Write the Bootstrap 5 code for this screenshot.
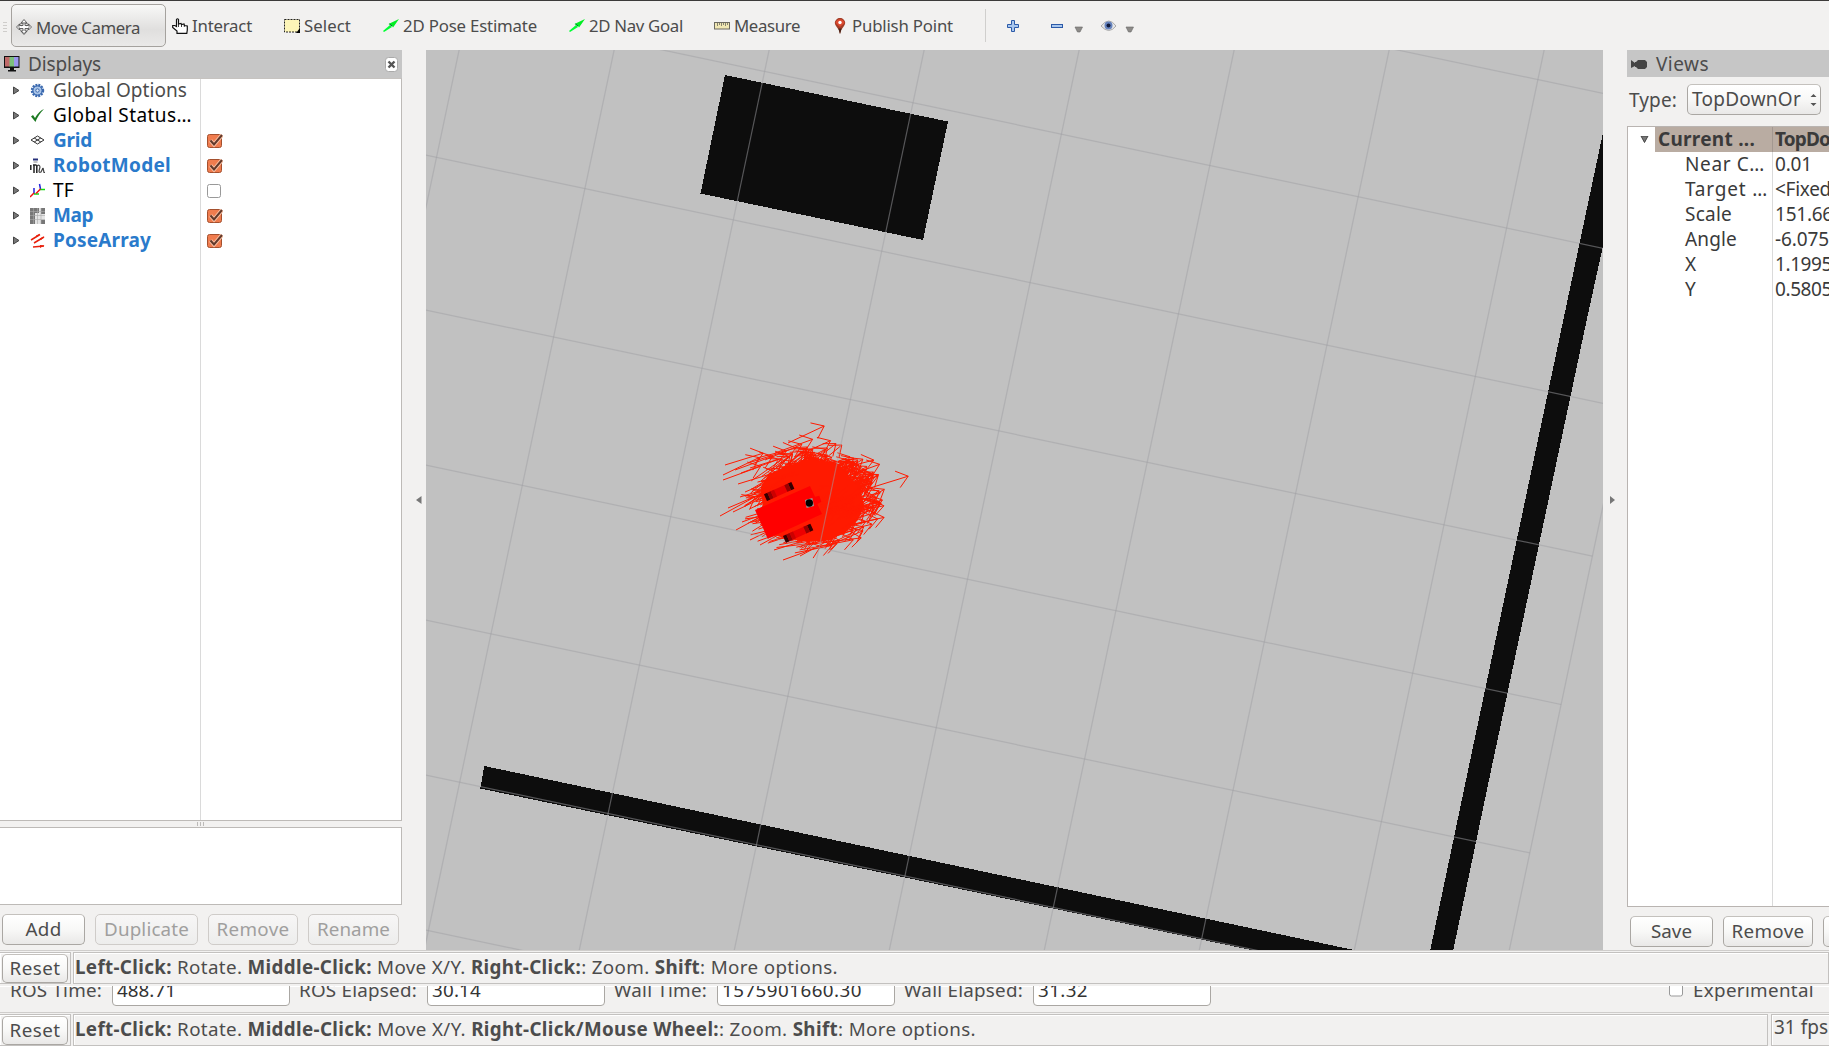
<!DOCTYPE html>
<html lang="en">
<head>
<meta charset="utf-8">
<title>RViz</title>
<link href="https://cdn.jsdelivr.net/npm/bootstrap@5.3.0/dist/css/bootstrap.min.css" rel="stylesheet">
<style>
body{font-family:"Noto Sans","Open Sans",sans-serif;font-size:19px;line-height:25px;color:#4c4c4c;background:#f2f1f0;width:1829px;height:1046px;overflow:hidden}
svg{display:block;flex:none}
[data-w]{white-space:nowrap;display:inline-block;flex:none}
.toolbar{height:50px;border-top:1px solid #3c3b3a;font-size:16.8px;flex:none}
.grip{width:11px;padding:21px 0 0 3px;flex:none}
.grip i{display:block;width:4px;height:1px;background:#cfcdcb;margin-bottom:2px}
.tool{height:43px;margin-top:3px;gap:4px;flex:none}
.tool.on{width:155px;border:1px solid #a5a29e;border-radius:5px;background:linear-gradient(#f8f8f7,#e0dfde 60%,#eae9e8);padding:3px 0 0 4px;margin-right:6px;gap:4px}
.t-int{width:112px}.t-sel{width:99px}.t-pose{width:186px}.t-nav{width:145px}.t-mea{width:119px}.t-pub{width:152px}
.vsep{width:1px;height:33px;background:#d0cfcd;margin-top:8px;margin-right:21px}
.main{height:900px;flex:none}
.leftcol{width:402px;flex:none}
.gut{width:24px;flex:none}
.dockhead{height:28px;background:#c6c6c6;flex:none;line-height:27px}
.tree{background:#fff;border:1px solid #bdbab7;border-left:0;height:743px;flex:none;border-top-color:#c6c3c0;background-image:linear-gradient(#dadada,#dadada);background-size:1px 100%;background-position:200px 0;background-repeat:no-repeat}
.trow{height:25px;flex:none}
.tree .trow:first-child{margin-top:-1px}
.trow .nm{width:154px;flex:none}
.blue{color:#2a7acb;font-weight:700}
.ink{color:#000}
.split{height:6px;gap:2px;flex:none;padding-right:64px}
.split{padding-right:2px}
.split i{width:1px;height:4px;background:#bcbab8}
.desc{height:78px;border:1px solid #bdbab7;border-left:0;background:#fff;flex:none}
.qbtn{height:31px;border:1px solid #aaa7a3;border-top-color:#c4c1bd;border-radius:5px;background:linear-gradient(#fff,#f8f8f7 50%,#e9e8e7);flex:none;color:#4c4c4c;padding:0;line-height:29px;font-size:18.8px;text-align:center;overflow:hidden}
.qbtn.off{color:#a09f9e;border-color:#cfccc9;background:linear-gradient(#f7f6f6,#ededec)}
.status{height:34px;flex:none;border-top:1px solid #cfcdcb;padding-top:1px;font-size:18.8px}
.fld{height:32px;border:1px solid #c3c1bf;background:#f2f1f0;box-shadow:inset 0 1px #fff,inset 1px 0 #fff;flex:none}
.status .qbtn{height:29px;width:66px;margin:1px 0 0 2px;line-height:26px}
.timebar{height:26px;flex:none;overflow:hidden;font-size:18.8px;box-shadow:inset 0 1px #fff;padding-left:10px}
.timebar>*{margin-top:-8px}
.timebar .lb{margin-right:10px}
.timebar .inp{height:31px;width:178px;margin:-11px 9px 0 0;border:1px solid #aaa7a3;border-radius:4px;background:#fff;color:#333;padding:2px 0 0 4px;flex:none}
.timebar .ecb{margin:-5px 10px 0 449px}
.rightcol{width:202px;flex:none;overflow:hidden}
.vtree{height:781px;background:#fff;border:1px solid #b9b4b1;border-right:0;flex:none;color:#3a3a3a;background-image:linear-gradient(#dadada,#dadada);background-size:1px 100%;background-position:144px 0;background-repeat:no-repeat}
.cur{background:linear-gradient(#a39890,#a39890) 117px 0/1px 100% no-repeat #b9aca2;font-weight:700;width:180px}
.leftbtns{padding:9px 0 0 2px;gap:10px}
.vhead{height:27px;padding-top:1px}
.vtype{height:49px;padding:7px 0 0 2px;gap:10px;line-height:33px;flex:none}
.combo{width:134px;padding-left:4px;gap:9px;font-size:19px}
.k1{width:120px;padding-left:3px;flex:none}
.vtree .kk{width:147px;padding-left:57px;flex:none}
.rbtns{padding:9px 0 0 3px;gap:10px}
.rbtns .qbtn:nth-child(1){width:83px}.rbtns .qbtn:nth-child(2){width:90px}.rbtns .qbtn:nth-child(3){width:80px}
.rs{width:71px;border-left:0;margin-right:2px}
.msg{padding:2px 0 0 1px}
.m2{width:1695px;margin-right:3px}
.fps{width:70px;padding:0 0 0 2px;font-size:19px}
.spacer{height:2px;flex:none}
</style>
<script src="https://cdn.jsdelivr.net/npm/bootstrap@5.3.0/dist/js/bootstrap.bundle.min.js"></script>
</head>
<body class="d-flex flex-column">
<svg width="0" height="0" class="position-absolute"><defs>
<g id="tri"><path d="M.5.5v7L6 4z" fill="#777" stroke="#444"/></g>
<g id="chk"><rect x=".5" y="1.500" width="14" height="13" rx="2" fill="#f07c4e" stroke="#a4502e"/><path d="M3.500 7.500 7 11.500 15 2" fill="none" stroke="#f9c2a6" stroke-width="4"/><path d="M3.500 7.500 7 11.500 15 2" fill="none" stroke="#63392a" stroke-width="2"/></g>
<g id="pose"><path d="M0 12 7 6l2 2L1 13z" fill="#0f3"/><path d="M5.500 5 16 0 10 8.500 9 7z" fill="#0e2"/><path d="m6.500 5 2.500 2" stroke="#063" stroke-width="1"/></g>
</defs></svg>

<div class="toolbar d-flex align-items-start">
 <div class="grip"><i></i><i></i><i></i><i></i></div>
 <div class="tool on d-flex align-items-center">
  <svg width="16" height="16" viewBox="0 0 16 16" fill="#fff" stroke="#555" stroke-width=".9"><path d="M8 .5 11 4H9v2.500h3.500V5L15.500 8l-3 3V9.500H9V12h2L8 15.500 5 12h2V9.500H3.500V11L.5 8l3-3v1.500H7V4H5z"/><path d="M4.500 4.500Q8 3 11.500 4.500T11.500 11.500 4.500 11.500 4.500 4.500M3 5l3 2M13 5l-3 2" stroke-width=".7" fill="none"/></svg>
  <span data-w="104">Move Camera</span></div>
 <div class="tool t-int d-flex align-items-center">
  <svg width="16" height="16" viewBox="0 0 16 16" fill="#fff" stroke="#111" stroke-width="1.200"><path d="M5 15.300V13L.7 9.500V7.500h2L4.500 8.500V1.500Q5.500 0 6.500 1.500V6L9 5.500l.5 1L12 6l.5 1.500 2.800.5v4l-.5 3.300z"/><path d="M6.500 6v3M9.500 6.500V9M12.300 7v2" stroke-width=".8"/></svg>
  <span data-w="60">Interact</span></div>
 <div class="tool t-sel d-flex align-items-center">
  <svg width="16" height="14" viewBox="0 0 16 14"><rect x=".5" y=".5" width="15" height="12.500" fill="#fdf5b8" stroke="#222" stroke-dasharray="2 1"/><path d="M16 9v5h-4z" fill="#000"/></svg>
  <span data-w="47">Select</span></div>
 <div class="tool t-pose d-flex align-items-center">
  <svg width="16" height="14"><use href="#pose"/></svg><span data-w="134">2D Pose Estimate</span></div>
 <div class="tool t-nav d-flex align-items-center">
  <svg width="16" height="14"><use href="#pose"/></svg><span data-w="94">2D Nav Goal</span></div>
 <div class="tool t-mea d-flex align-items-center">
  <svg width="16" height="8" viewBox="0 0 16 8"><rect x=".5" y=".5" width="15" height="6.500" fill="#f1e8b4" stroke="#6c6a60"/><path d="M3.500 1v3M5.500 1v2M7.500 1v3M9.500 1v2M11.500 1v3M13.500 1v2" stroke="#6c6a60" stroke-width=".8"/></svg>
  <span data-w="66">Measure</span></div>
 <div class="tool t-pub d-flex align-items-center">
  <svg width="15" height="16" viewBox="-2 0 15 16"><path d="M5 16Q4 11 1 8A5 5 0 1 1 9 8Q6 11 5 16" fill="#a33c26"/><path d="M.5 5A4.600 4.600 0 0 1 9.500 5L5 9z" fill="#dc4a30"/><circle cx="5" cy="4.500" r="1.700" fill="#fff"/><path d="M3.300 10.500h3.400L5 16z" fill="#4a2418"/></svg>
  <span data-w="101">Publish Point</span></div>
 <div class="vsep"></div>
 <div class="tool d-flex align-items-center">
  <svg width="130" height="16" viewBox="0 0 130 16"><path d="M4.500 2.500h3v4h4v3h-4v4h-3v-4h-4v-3h4z" fill="#a9c7ee" stroke="#2c5aa8"/><rect x="44.500" y="6.500" width="11" height="3" fill="#a9c7ee" stroke="#2c5aa8"/><path d="M68 9h7.500l-2.500 5h-2.500zM119 9h7.500L124 14h-2.500z" fill="#8d8b88" stroke="#666" stroke-width=".6"/><path d="M94 8q8-10 15 0-7 9-15 0" fill="#e8e8e8" stroke="#aaa"/><circle cx="101.500" cy="7.500" r="4" fill="#6683bd"/><circle cx="101.500" cy="7.500" r="2" fill="#111a3a"/></svg></div>
</div>

<div class="main d-flex">
 <div class="leftcol d-flex flex-column">
  <div class="dockhead d-flex align-items-center" >
   <svg width="16" height="16" viewBox="0 0 16 16" class="ms-1 me-2"><rect x="0" y="0" width="15.500" height="12" fill="#111"/><path d="M1 1h5v9.500H1z" fill="#c06a6a"/><path d="M5.500 1h5v9.500h-5z" fill="#7cc07c"/><path d="M10 1h4.500v9.500H10z" fill="#9a96ee"/><path d="M6 12h4v2h2v1.500H4V14h2z" fill="#111"/></svg>
   <span data-w="73">Displays</span>
   <svg class="ms-auto me-1" width="13" height="15" viewBox="0 0 13 15"><rect x=".5" y=".5" width="12" height="14" rx="3" fill="#fff" stroke="#aaa"/><path d="m3.500 4.500 6 6m0-6-6 6" stroke="#555" stroke-width="2.400"/></svg>
  </div>
  <div class="tree">
   <div class="trow d-flex align-items-center"><svg width="30" height="9" viewBox="-13 -.5 30 9"><use href="#tri"/></svg><svg class="me-2" width="15" height="15" viewBox="-7.500 -7.500 15 15"><circle r="5.500" fill="#8fb2e0" stroke="#3a68ae" stroke-width="2.400" stroke-dasharray="1.900 1"/><circle r="4.500" fill="#a9c4e8" stroke="#3a68ae"/><circle r="1.700" fill="#dce8f8" stroke="#3a68ae"/></svg><span data-w="134">Global Options</span></div>
   <div class="trow d-flex align-items-center ink"><svg width="30" height="9" viewBox="-13 -.5 30 9"><use href="#tri"/></svg><svg class="me-2" width="15" height="15" viewBox="0 0 15 15"><path d="M1 8.500 3 7l2 3Q9 3 14 1 8 7 5.500 14z" fill="#1c7a22"/></svg><span data-w="139">Global Status…</span></div>
   <div class="trow d-flex align-items-center blue"><svg width="30" height="9" viewBox="-13 -.5 30 9"><use href="#tri"/></svg><svg class="me-2" width="15" height="15" viewBox="0 0 15 15" fill="none" stroke="#333" stroke-width="1"><path d="M7.500 3 14 7l-6.500 4L1 7zM4.200 5l6.600 4M10.800 5 4.200 9"/></svg><span class="nm"><span data-w="39">Grid</span></span><svg width="16" height="16"><use href="#chk"/></svg></div>
   <div class="trow d-flex align-items-center blue"><svg width="30" height="9" viewBox="-13 -.5 30 9"><use href="#tri"/></svg><svg class="me-2" width="15" height="16" viewBox="0 0 15 16"><path d="M3 1.500h5" stroke="#27307a" stroke-width="2"/><path d="M3.500 4h4" stroke="#888"/><path d="M.8 7v5M4 6.500V15M6.800 7V15M3 7h3.500" stroke="#222" stroke-width="1.500" fill="none"/><path d="M7 8q2.500-2 3 1l-1 4q0 2 2 1l2-4M13 10l1 4.500h1" stroke="#444" stroke-width="1.200" fill="none"/></svg><span class="nm"><span data-w="118">RobotModel</span></span><svg width="16" height="16"><use href="#chk"/></svg></div>
   <div class="trow d-flex align-items-center ink"><svg width="30" height="9" viewBox="-13 -.5 30 9"><use href="#tri"/></svg><svg class="me-2" width="15" height="15" viewBox="0 0 15 15" fill="none" stroke-width="1.500"><path d="M4 5v6M9.500 1l1 5" stroke="#22d"/><path d="M4 11h5M10 6.500h5" stroke="#1d1"/><path d="m4 10-4 4M10.500 6 6 10.500" stroke="#e11"/></svg><span class="nm"><span data-w="21">TF</span></span><svg width="16" height="16"><rect x=".5" y="1.500" width="13" height="13" rx="2" fill="#fff" stroke="#999"/></svg></div>
   <div class="trow d-flex align-items-center blue"><svg width="30" height="9" viewBox="-13 -.5 30 9"><use href="#tri"/></svg><svg class="me-2" width="15" height="16" viewBox="0 0 15 16"><rect width="15" height="16" fill="#e4e4e4"/><path d="M0 0h9v5H5v11H0zM11 0h4v6h-4zM11 12h4v4h-4z" fill="#777"/><path d="M3.500 0v16M7.500 0v16M11 0v16M0 3.500h15M0 7.500h15M0 11.500h15" stroke="#aaa" stroke-width=".6"/></svg><span class="nm"><span data-w="40">Map</span></span><svg width="16" height="16"><use href="#chk"/></svg></div>
   <div class="trow d-flex align-items-center blue"><svg width="30" height="9" viewBox="-13 -.5 30 9"><use href="#tri"/></svg><svg class="me-2" width="15" height="15" viewBox="0 0 15 15" stroke="#e8200c" stroke-width="1.500" fill="#e8200c"><path d="m1 7 9-5.500M4 10l10-6M3 14l11-1"/><path d="M10 .8 6.500 4 6 2.500zM14.500 3.500 11 7l-1-1.800zM14.500 12.500 10 15v-3z" stroke="none"/></svg><span class="nm"><span data-w="98">PoseArray</span></span><svg width="16" height="16"><use href="#chk"/></svg></div>
  </div>
  <div class="split d-flex justify-content-center align-items-center"><i></i><i></i><i></i></div>
  <div class="desc"></div>
  <div class="d-flex leftbtns"><div class="qbtn" style="width:83px"><span data-w="36">Add</span></div><div class="qbtn off" style="width:103px"><span data-w="85">Duplicate</span></div><div class="qbtn off" style="width:90px"><span data-w="73">Remove</span></div><div class="qbtn off" style="width:91px"><span data-w="73">Rename</span></div></div>
 </div>
 <div class="gut d-flex align-items-center justify-content-end pe-1"><svg width="6" height="8"><path d="M5.500 0v8L0 4z" fill="#777"/></svg></div>
 <svg id="map" width="1177" height="900" viewBox="426 50 1177 900">
  <rect x="426" y="50" width="1177" height="900" fill="#c1c1c1"/>
  <g fill="#0d0d0d" shape-rendering="crispEdges">
   <path d="M725 75 948 121.500 923 240 700.500 193.500z"/>
   <path d="M484.300 766 1354 950H1251L480.300 788.500z"/>
   <path d="M1603 132.700V246L1586.700 320 1489 780 1453.300 950H1430.300L1466 780 1563.300 320z"/>
  </g>
  <g id="cloud" fill="none" stroke="#ff1a00" stroke-width="1"></g>
  <g id="gridlines" stroke="#a0a0a4" stroke-opacity=".5" stroke-width="1.200"></g>
  <g transform="translate(700 400) scale(.33333)">
   <path d="M165 330 330 258 345 290 358 287 364 305 352 312 366 342 203 416z" fill="#f00"/>
   <g id="wheel"><path d="M192 283 274 246 283 266 201 303z" fill="#e00"/><path d="M192 283 202 278.500 211 298.500 201 303zM264 250.500 274 246 283 266 273 270.500z" fill="#300"/><path d="M202 278.500 212 274 221 294 211 298.500zM253 255.500 264 250.500 273 270.500 262 275.500z" fill="#900"/><path d="M212 274 222 269.500 231 289.500 221 294z" fill="#c00"/></g>
   <use href="#wheel" x="57" y="125"/>
   <path d="m315 300 22-6 5 24-22 6z" fill="#999"/><circle cx="328" cy="309" r="11" fill="#000"/>
  </g>
 </svg>
 <div class="gut d-flex align-items-center"><svg width="14" height="8"><path d="M7 0v8l5-4z" fill="#777"/></svg></div>
 <div class="rightcol d-flex flex-column">
  <div class="dockhead vhead d-flex align-items-center">
   <svg class="ms-1 me-2" width="17" height="9" viewBox="0 0 17 9"><path d="M0 0 4 3V2h1l2-2h7l2 2v5l-2 2H7L5 7H4V6L0 8z" fill="#444"/></svg><span data-w="53">Views</span></div>
  <div class="d-flex vtype"><span data-w="48">Type:</span><div class="qbtn combo d-flex align-items-center"><span data-w="109">TopDownOr</span><svg width="7" height="12" viewBox="0 0 7 12"><path d="M.5 3 3.500 0l3 3zM.5 9h6l-3 3z" fill="#555"/></svg></div></div>
  <div class="vtree">
   <div class="trow d-flex align-items-center"><svg width="27" height="8" viewBox="-12.500 0.500 27 8"><path d="M.5.5h7L4 7z" fill="#777" stroke="#444"/></svg><div class="cur d-flex"><span class="k1"><span data-w="97">Current ...</span></span><span data-w="55">TopDo</span></div></div>
   <div class="trow d-flex"><span class="kk"><span data-w="80">Near C…</span></span><span data-w="37">0.01</span></div>
   <div class="trow d-flex"><span class="kk"><span data-w="83">Target …</span></span><span data-w="56">&lt;Fixed</span></div>
   <div class="trow d-flex"><span class="kk"><span data-w="47">Scale</span></span><span data-w="58">151.66</span></div>
   <div class="trow d-flex"><span class="kk"><span data-w="52">Angle</span></span><span data-w="54">-6.075</span></div>
   <div class="trow d-flex"><span class="kk"><span data-w="12">X</span></span><span data-w="57">1.1995</span></div>
   <div class="trow d-flex"><span class="kk"><span data-w="12">Y</span></span><span data-w="57">0.5805</span></div>
  </div>
  <div class="d-flex rbtns"><div class="qbtn"><span data-w="41">Save</span></div><div class="qbtn"><span data-w="73">Remove</span></div><div class="qbtn"></div></div>
 </div>
</div>

<div class="status d-flex">
 <div class="fld rs"><div class="qbtn"><span data-w="51">Reset</span></div></div>
 <div class="fld msg flex-grow-1"><span data-w="763"><b>Left-Click:</b> Rotate. <b>Middle-Click:</b> Move X/Y. <b>Right-Click:</b>: Zoom. <b>Shift</b>: More options.</span></div>
</div>
<div class="spacer"></div>
<div class="timebar d-flex">
 <span class="lb" data-w="92">ROS Time:</span><div class="inp"><span data-w="59">488.71</span></div>
 <span class="lb" data-w="118">ROS Elapsed:</span><div class="inp"><span data-w="49">30.14</span></div>
 <span class="lb" data-w="93">Wall Time:</span><div class="inp"><span data-w="140">1575901660.30</span></div>
 <span class="lb" data-w="119">Wall Elapsed:</span><div class="inp"><span data-w="50">31.32</span></div>
 <svg class="ecb" width="14" height="17"><rect x=".5" y="-5" width="13" height="20" rx="2" fill="#fff" stroke="#999"/></svg><span data-w="121">Experimental</span>
</div>
<div class="status d-flex">
 <div class="fld rs"><div class="qbtn"><span data-w="51">Reset</span></div></div>
 <div class="fld msg m2"><span data-w="901"><b>Left-Click:</b> Rotate. <b>Middle-Click:</b> Move X/Y. <b>Right-Click/Mouse Wheel:</b>: Zoom. <b>Shift</b>: More options.</span></div>
 <div class="fld fps"><span data-w="54">31 fps</span></div>
</div>
<script>
const S='http://www.w3.org/2000/svg';
// ground grid, one cell is 151.66 px, rotated
const P=(i,j)=>[436.5+148.4*i-31.3*j,157.3+31.3*i+148.4*j];
const line=(g,a,b)=>{const l=document.createElementNS(S,'path');l.setAttribute('d','M'+a+'L'+b);g.append(l);};
const gl=document.getElementById('gridlines');
for(let j=-3;j<=6;j++)line(gl,P(-2,j),P(8,j));
for(let i=-1;i<=8;i++)line(gl,P(i,-3),P(i,6));
// particle cloud of pose arrows
let s=7;const R=()=>(s=(s*16807)%2147483647)/2147483647;
let d='';const arrow=(x,y,a,L)=>{const tx=x+L*Math.cos(a),ty=y+L*Math.sin(a),h=L*.35;
 d+=`M${x.toFixed(1)} ${y.toFixed(1)}L${tx.toFixed(1)} ${ty.toFixed(1)}M${(tx-h*Math.cos(a+.66)).toFixed(1)} ${(ty-h*Math.sin(a+.66)).toFixed(1)}L${tx.toFixed(1)} ${ty.toFixed(1)}L${(tx-h*Math.cos(a-.66)).toFixed(1)} ${(ty-h*Math.sin(a-.66)).toFixed(1)}`;};
for(let n=0;n<430;n++){const t=R()*6.283,r=Math.pow(R(),.62)*(n%6?1:1.13);arrow(796+52*r*Math.cos(t),509+42*r*Math.sin(t),-.42+(R()-.5)*.6,38);}
[[788,443,-.44],[870,488,-.3],[725,465,-.3],[723,475,-.45],[723,480,-.35],[720,516,-.5],[783,560,-.35],[794,457,-.42],[775,453,-.35],[736,530,-.5],[738,484,-.3],[774,550,-.3],[842,478,-.35],[835,470,-.25],[728,508,-.4],[741,473,-.35],[750,468,-.3],[745,492,-.4],[742,522,-.35],[750,540,-.45],[760,545,-.5],[733,512,-.45],[757,458,-.25],[765,460,-.4],[735,470,-.35],[748,463,-.3],[800,556,-.5],[740,497,-.3]].forEach(([x,y,a])=>arrow(x,y,a,40));
document.getElementById('cloud').innerHTML='<path fill="#ff1a00" stroke="none" d="M761 487 768 475 785 467 808 459 832 462 848 474 860 490 864 505 858 520 845 533 825 541 800 541 778 536 764 520z"/><path d="'+d+'"/>';
// tune letter spacing so each label fills its width
document.querySelectorAll('[data-w]').forEach(e=>{const n=e.textContent.length;
 e.style.letterSpacing=((+e.dataset.w-e.getBoundingClientRect().width)/n).toFixed(3)+'px';});
</script>
</body>
</html>
